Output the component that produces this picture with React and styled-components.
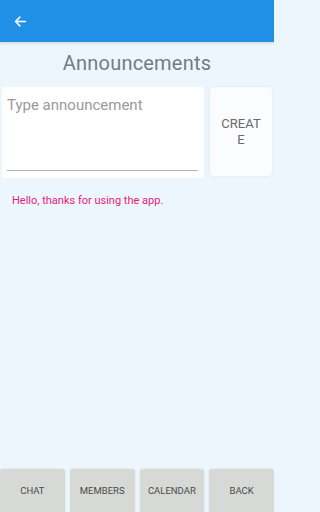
import React from "react";
import styled, { createGlobalStyle } from "styled-components";

const Global = createGlobalStyle`
  html, body { margin: 0; padding: 0; }
  body { background: #eef6fd; font-family: Roboto, "Liberation Sans", sans-serif; }
  #root { height: 512px; }
`;

const Screen = styled.div`
  width: 274px;
  height: 512px;
  display: flex;
  flex-direction: column;
  background: #eef6fd;
  overflow: hidden;
`;

const AppBar = styled.div`
  height: 42px;
  background: #1f90e6;
  display: flex;
  align-items: center;
  padding-left: 13px;
  box-shadow: 0 1px 3px rgba(0,0,0,0.15);
  flex-shrink: 0;
`;

const Title = styled.h1`
  margin: 0;
  padding-top: 9px;
  height: 36px;
  font-weight: 400;
  font-size: 20px;
  line-height: 24px;
  text-align: center;
  color: #737b84;
  letter-spacing: 0.2px;
`;

const InputRow = styled.div`
  display: flex;
  gap: 6px;
  padding: 0 2px;
  height: 91px;
`;

const InputCard = styled.div`
  flex: 1;
  background: #fff;
  display: flex;
  flex-direction: column;
  justify-content: space-between;
  padding: 8px 4px 7px 3px;
  border-radius: 2px;
`;

const Placeholder = styled.div`
  font-size: 15px;
  line-height: 20px;
  color: #9a9a9a;
  padding-left: 2px;
`;

const Underline = styled.div`
  height: 1px;
  background: #b5b5b5;
  margin: 0 2px;
`;

const CreateButton = styled.button`
  width: 62px;
  height: 89px;
  border: none;
  border-radius: 4px;
  background: #fbfcfd;
  box-shadow: 0 0 3px rgba(180,200,215,0.35);
  color: #676b70;
  font-family: Roboto, "Liberation Sans", sans-serif;
  font-size: 13px;
  line-height: 16px;
  padding: 0 8px;
  word-break: break-all;
  text-align: center;
`;

const Message = styled.p`
  margin: 0;
  padding: 16px 12px 0;
  font-size: 11px;
  line-height: 14px;
  color: #e3227a;
`;

const Spacer = styled.div`
  flex: 1;
`;

const NavBar = styled.div`
  display: grid;
  grid-template-columns: repeat(4, 1fr);
  gap: 5px;
  height: 43px;
  flex-shrink: 0;
`;

const NavButton = styled.button`
  border: none;
  border-radius: 3px 3px 0 0;
  background: #d7d9d7;
  box-shadow: 0 0 2px rgba(0,0,0,0.12);
  color: #4a4a4a;
  font-family: Roboto, "Liberation Sans", sans-serif;
  font-size: 9.5px;
  text-transform: uppercase;
  padding: 0;
`;

const BackArrow = () => (
  <svg width="15" height="15" viewBox="0 0 24 24" fill="none">
    <path d="M20 12H4M11 5l-7 7 7 7" stroke="#fff" strokeWidth="2.4" strokeLinecap="round" strokeLinejoin="round" />
  </svg>
);

export default function App() {
  return (
    <>
      <Global />
      <Screen>
        <AppBar>
          <BackArrow />
        </AppBar>
        <Title>Announcements</Title>
        <InputRow>
          <InputCard>
            <Placeholder>Type announcement</Placeholder>
            <Underline />
          </InputCard>
          <CreateButton>CREATE</CreateButton>
        </InputRow>
        <Message>Hello, thanks for using the app.</Message>
        <Spacer />
        <NavBar>
          {["Chat", "Members", "Calendar", "Back"].map((l) => (
            <NavButton key={l}>{l}</NavButton>
          ))}
        </NavBar>
      </Screen>
    </>
  );
}
